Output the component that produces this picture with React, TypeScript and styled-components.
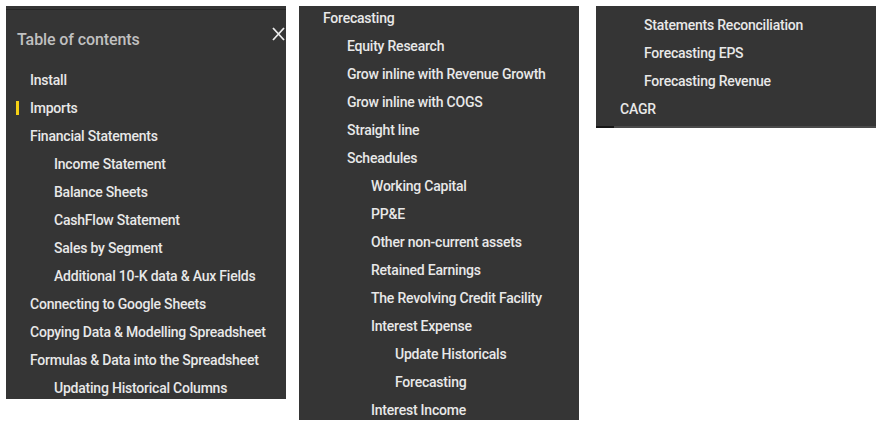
import React from "react";
import styled, { createGlobalStyle } from "styled-components";

const Global = createGlobalStyle`
  html, body { margin: 0; padding: 0; background: #ffffff; }
  body { font-family: Roboto, "Noto Sans", "Liberation Sans", sans-serif; }
  * { box-sizing: border-box; }
`;

const Page = styled.div`
  display: flex;
  align-items: flex-start;
  padding: 6px 0 0 6px;
  gap: 13px;
`;

const Panel = styled.section<{ $height: number; $shift?: number }>`
  width: 280px;
  height: ${(p) => p.$height}px;
  margin-left: ${(p) => p.$shift ?? 0}px;
  background: #353535;
  overflow: hidden;
  display: flex;
  flex-direction: column;
`;

const TopRule = styled.div`
  margin-top: 3px;
  height: 1px;
  background: #262626;
  flex: none;
`;

const Header = styled.header`
  height: 56px;
  display: flex;
  justify-content: space-between;
  align-items: flex-start;
  padding: 0 1px 0 11px;
  flex: none;
`;

const Title = styled.h2`
  margin: 20px 0 0;
  font-size: 16px;
  line-height: 20px;
  font-weight: 500;
  letter-spacing: -0.1px;
  color: #c0c0c0;
`;

const Close = styled.button`
  margin-top: 17px;
  padding: 0;
  border: 0;
  background: none;
  width: 13px;
  height: 14px;
  display: block;
  color: #ececec;
`;

const List = styled.ul<{ $top: number }>`
  list-style: none;
  margin: ${(p) => p.$top}px 0 0;
  padding: 0;
  flex: none;
`;

const Row = styled.li<{ $level: number }>`
  position: relative;
  height: 28px;
  display: flex;
  align-items: center;
  padding-left: ${(p) => 24 + p.$level * 24}px;
  font-size: 14px;
  font-weight: 500;
  letter-spacing: -0.22px;
  color: #e8e8e8;
  white-space: nowrap;
`;

const Marker = styled.span`
  position: absolute;
  left: 10px;
  top: 7px;
  width: 3px;
  height: 14px;
  background: #f5d015;
`;

const ScrollBar = styled.div`
  margin-top: auto;
  height: 2px;
  display: flex;
  flex: none;
`;

const ScrollEnd = styled.div`
  width: 18px;
  background: #161616;
`;

const ScrollTrack = styled.div`
  flex: 1;
  background: #4a4a4a;
`;

type Item = [number, string, boolean?];

const first: Item[] = [
  [0, "Install"],
  [0, "Imports", true],
  [0, "Financial Statements"],
  [1, "Income Statement"],
  [1, "Balance Sheets"],
  [1, "CashFlow Statement"],
  [1, "Sales by Segment"],
  [1, "Additional 10-K data & Aux Fields"],
  [0, "Connecting to Google Sheets"],
  [0, "Copying Data & Modelling Spreadsheet"],
  [0, "Formulas & Data into the Spreadsheet"],
  [1, "Updating Historical Columns"],
];

const second: Item[] = [
  [0, "Forecasting"],
  [1, "Equity Research"],
  [1, "Grow inline with Revenue Growth"],
  [1, "Grow inline with COGS"],
  [1, "Straight line"],
  [1, "Scheadules"],
  [2, "Working Capital"],
  [2, "PP&E"],
  [2, "Other non-current assets"],
  [2, "Retained Earnings"],
  [2, "The Revolving Credit Facility"],
  [2, "Interest Expense"],
  [3, "Update Historicals"],
  [3, "Forecasting"],
  [2, "Interest Income"],
];

const third: Item[] = [
  [1, "Statements Reconciliation"],
  [1, "Forecasting EPS"],
  [1, "Forecasting Revenue"],
  [0, "CAGR"],
];

function Rows({ items, top }: { items: Item[]; top: number }) {
  return (
    <List $top={top}>
      {items.map(([level, label, active], i) => (
        <Row key={i} $level={level}>
          {active && <Marker />}
          {label}
        </Row>
      ))}
    </List>
  );
}

export default function App() {
  return (
    <>
      <Global />
      <Page>
        <Panel $height={393}>
          <TopRule />
          <Header>
            <Title>Table of contents</Title>
            <Close aria-label="Close">
              <svg width="13" height="14" viewBox="0 0 13 14" fill="none">
                <path d="M1 1 L12 13 M12 1 L1 13" stroke="currentColor" strokeWidth="1.8" />
              </svg>
            </Close>
          </Header>
          <Rows items={first} top={0} />
        </Panel>
        <Panel $height={414}>
          <Rows items={second} top={-2} />
        </Panel>
        <Panel $height={122} $shift={4}>
          <Rows items={third} top={5} />
          <ScrollBar>
            <ScrollEnd />
            <ScrollTrack />
          </ScrollBar>
        </Panel>
      </Page>
    </>
  );
}
